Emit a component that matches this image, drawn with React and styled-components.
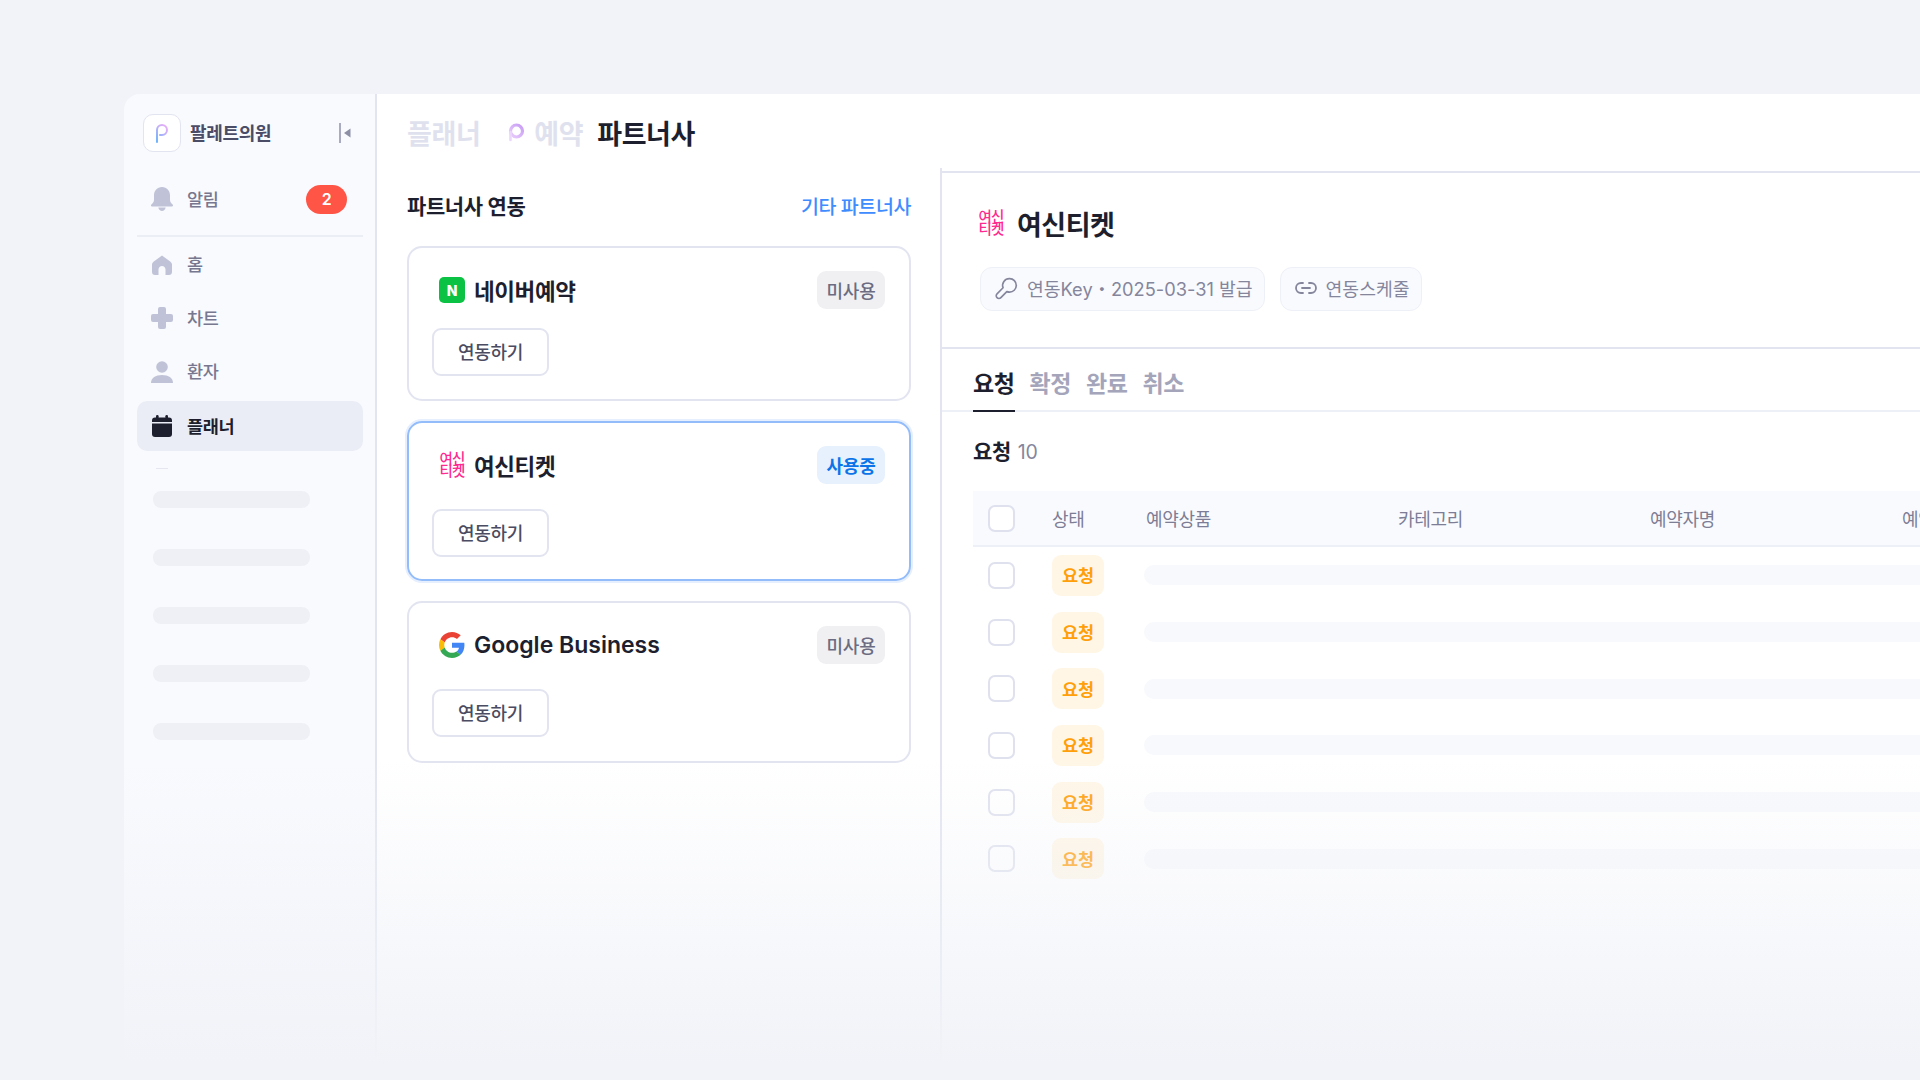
import React from 'react'
import styled, { createGlobalStyle } from 'styled-components'
import { Link2 } from 'lucide-react'

const GlobalStyle = createGlobalStyle`
  html, body { margin: 0; padding: 0; background: #f1f3f8; }
  * { box-sizing: border-box; }
  body { font-family: Inter, "Noto Sans CJK KR", "Noto Sans", sans-serif; color: #1e1f2e; }
`

const Page = styled.div`
  position: relative;
  width: 1920px;
  height: 1080px;
  overflow: hidden;
  padding: 94px 0 0 124px;
  display: flex;
  background: #f1f3f8;
`
const Fade = styled.div`
  position: absolute;
  left: 0;
  right: 0;
  top: 760px;
  height: 320px;
  pointer-events: none;
  background: linear-gradient(to bottom, rgba(241,243,248,0) 0%, rgba(241,243,248,1) 95%);
`
const Side = styled.aside`
  width: 253px;
  flex: none;
  background: #f9fafe;
  border-right: 2px solid #e2e4f0;
  border-top-left-radius: 16px;
  padding: 20px 12px 0 13px;
`
const Brand = styled.div`
  display: flex;
  align-items: center;
  height: 38px;
  padding: 0 6px;
  margin-bottom: 25px;
`
const BrandBox = styled.div`
  width: 38px;
  height: 38px;
  border: 1.5px solid #e2e4f0;
  border-radius: 10px;
  background: #fff;
  display: flex;
  align-items: center;
  justify-content: center;
`
const BrandName = styled.span`
  margin-left: 9px;
  font-size: 18px;
  font-weight: 600;
  color: #4b4c66;
  letter-spacing: -0.3px;
  flex: 1;
  position: relative;
  top: -1px;
`
const Collapse = styled.svg`
  margin-right: 6px;
`
const NavItem = styled.div`
  display: flex;
  align-items: center;
  height: ${p => p.$h || 50}px;
  padding: 0 13px;
  gap: 13px;
  border-radius: 10px;
  font-size: 17.5px;
  letter-spacing: -0.3px;
  color: ${p => (p.$active ? '#1e1f2e' : '#77788f')};
  background: ${p => (p.$active ? '#ebedf6' : 'transparent')};
  font-weight: ${p => (p.$active ? 600 : 500)};
  margin-top: ${p => (p.$active ? 2.5 : 0)}px;
`
const NavLabel = styled.span`
  flex: 1;
  position: relative;
  top: -1px;
`
const NavIcon = styled.svg`
  width: 24px;
  height: 24px;
  flex: none;
`
const Counter = styled.span`
  width: 41px;
  height: 29px;
  border-radius: 15px;
  background: #ff5546;
  color: #fff;
  font-size: 16px;
  font-weight: 600;
  display: flex;
  align-items: center;
  justify-content: center;
  margin-right: 3px;
`
const SideRule = styled.div`
  height: 2px;
  background: #eceef5;
  margin: 14px 0 1px;
`
const Tick = styled.div`
  width: 12px;
  height: 1px;
  background: #e5e7f0;
  margin: 17px 0 0 19px;
`
const SkeletonList = styled.div`
  display: flex;
  flex-direction: column;
  gap: 41px;
  margin: 22px 0 0 16px;
`
const SideSkeleton = styled.div`
  width: 157px;
  height: 17px;
  border-radius: 8px;
  background: #eff0f6;
`

const Main = styled.main`
  flex: 1;
  background: #fff;
  display: flex;
  flex-direction: column;
  min-width: 0;
`
const Crumbs = styled.div`
  height: 74px;
  flex: none;
  display: flex;
  align-items: center;
  padding: 2px 0 0 30px;
  font-size: 27px;
  font-weight: 600;
  letter-spacing: -0.4px;
  color: #dfe2ee;
`
const CrumbCurrent = styled.span`
  color: #1e1f2e;
  margin-left: 14px;
`
const CrumbRing = styled.svg`
  margin: 0 8px 0 26px;
`
const Split = styled.div`
  flex: 1;
  display: flex;
  min-height: 0;
`
const Left = styled.section`
  width: 563px;
  flex: none;
  padding: 21px 29px 0 30px;
`
const SectionHead = styled.div`
  display: flex;
  justify-content: space-between;
  align-items: center;
  height: 32px;
  margin-bottom: 25px;
`
const SectionTitle = styled.h2`
  margin: 0;
  font-size: 21px;
  font-weight: 600;
  letter-spacing: -0.4px;
`
const SectionLink = styled.a`
  font-size: 19.5px;
  font-weight: 500;
  letter-spacing: -0.4px;
  color: #3f8cff;
`
const Cards = styled.div`
  display: flex;
  flex-direction: column;
  gap: 20px;
`
const Card = styled.article`
  height: ${p => p.$h}px;
  border: 2px solid ${p => (p.$active ? '#93bcfb' : '#e2e4f0')};
  box-shadow: ${p => (p.$active ? '0 0 0 2px #e6effd' : 'none')};
  border-radius: 15px;
  padding: 23px 24px 0 23px;
`
const CardTop = styled.div`
  display: flex;
  align-items: center;
  height: 38px;
  padding: 0 0 0 7px;
  margin-bottom: ${p => p.$gap}px;
`
const CardName = styled.h3`
  margin: 0 0 0 9px;
  flex: 1;
  font-size: ${p => (p.$latin ? 23 : 22.5)}px;
  font-weight: 600;
  letter-spacing: ${p => (p.$latin ? 0 : -0.4)}px;
  color: #1e1f2e;
`
const StatusTag = styled.span`
  width: 68px;
  height: 38px;
  border-radius: 9px;
  display: flex;
  align-items: center;
  justify-content: center;
  font-size: 18px;
  letter-spacing: -0.3px;
  font-weight: ${p => (p.$on ? 600 : 500)};
  color: ${p => (p.$on ? '#0a74e8' : '#6b6c82')};
  background: ${p => (p.$on ? '#e6f1fd' : '#f0f0f3')};
`
const LinkButton = styled.button`
  width: 117px;
  height: 48px;
  border: 2px solid #e2e4f0;
  border-radius: 9px;
  background: #fff;
  font: inherit;
  font-size: 18px;
  font-weight: 500;
  letter-spacing: -0.3px;
  color: #4b4c62;
  padding: 0 0 2px;
`
const NaverMark = styled.span`
  width: 26px;
  height: 26px;
  border-radius: 5px;
  background: #0cc244;
  color: #fff;
  font-size: 14px;
  font-weight: 800;
  display: flex;
  align-items: center;
  justify-content: center;
  flex: none;
`
const TicketMark = styled.span`
  width: 26px;
  flex: none;
  color: #ff2a8f;
  font-size: 14.5px;
  line-height: 12.5px;
  font-weight: 500;
  letter-spacing: -0.8px;
  text-align: center;
  white-space: pre-line;
`

const Right = styled.section`
  flex: 1;
  min-width: 0;
  border-left: 2px solid #e2e4f0;
  display: flex;
  flex-direction: column;
`
const RightHead = styled.div`
  border-top: 2px solid #e2e4f0;
  margin-top: 3px;
  height: 178px;
  flex: none;
  padding: 28px 0 0 36px;
  border-bottom: 2px solid #e2e4f0;
`
const RightTitleRow = styled.div`
  display: flex;
  align-items: center;
  height: 44px;
  margin-bottom: 22px;
`
const RightTitle = styled.h1`
  margin: 0 0 0 13px;
  font-size: 27px;
  font-weight: 600;
  letter-spacing: -0.5px;
`
const PillRow = styled.div`
  display: flex;
  gap: 15px;
  margin-left: 2px;
`
const InfoPill = styled.div`
  height: 44px;
  padding: 0 11px 2px 13px;
  display: flex;
  align-items: center;
  gap: 8px;
  border: 1.5px solid #eef0f7;
  border-radius: 12px;
  background: #f9fafe;
  color: #85869c;
  font-size: 18.25px;
`
const Body = styled.div`
  padding: 0 0 0 31px;
`
const Tabs = styled.div`
  display: flex;
  gap: 15px;
  height: 63px;
  border-bottom: 2px solid #eef0f7;
  margin-left: -31px;
  padding-left: 31px;
`
const Tab = styled.div`
  height: 63px;
  padding-top: 16px;
  font-size: 23px;
  font-weight: 600;
  letter-spacing: -0.4px;
  color: ${p => (p.$active ? '#1e1f2e' : '#a4a5bb')};
  border-bottom: 2px solid ${p => (p.$active ? '#1e1f2e' : 'transparent')};
`
const CountRow = styled.div`
  display: flex;
  align-items: baseline;
  gap: 7px;
  height: 79px;
  padding-top: 23px;
  font-size: 21px;
  font-weight: 600;
  letter-spacing: -0.4px;
`
const CountNum = styled.span`
  font-size: 19.5px;
  font-weight: 400;
  color: #85869c;
`
const Table = styled.div`
  width: 1100px;
`
const HeadRow = styled.div`
  display: grid;
  grid-template-columns: 64px 94px 252px 252px 252px 172px;
  align-items: center;
  height: 56px;
  padding-left: 15px;
  background: #f9fafe;
  border-bottom: 2px solid #eef0f7;
  font-size: 18px;
  letter-spacing: -0.35px;
  color: #7d7e95;
`
const DataRow = styled.div`
  display: grid;
  grid-template-columns: 64px 92px 1fr;
  align-items: center;
  height: 56.7px;
  padding-left: 15px;
`
const Check = styled.span`
  display: block;
  width: 27px;
  height: 27px;
  border: 2px solid #dfe1ee;
  border-radius: 7px;
  background: #fff;
`
const RequestTag = styled.span`
  width: 52px;
  height: 41px;
  border-radius: 9px;
  background: #fff6e6;
  color: #ff9f0a;
  font-size: 17.5px;
  font-weight: 600;
  display: flex;
  align-items: center;
  justify-content: center;
  padding-bottom: 1px;
`
const RowSkeleton = styled.div`
  height: 20px;
  border-radius: 10px;
  background: #f8f9fc;
`

const IconBell = () => (
  <NavIcon viewBox="0 0 24 24" fill="#c0c3d7">
    <path d="M12 0C7.200 0 4 3.600 4 8.500V13c0 1.900-1.200 3.300-2.600 4.500-.8.700-.4 1.900.6 1.900h20c1 0 1.400-1.200.6-1.900C21.200 16.300 20 14.900 20 13V8.500C20 3.600 16.800 0 12 0z" />
    <path d="M8.300 20.600h7.400C15.200 22.800 13.800 24 12 24s-3.200-1.200-3.700-3.400z" />
  </NavIcon>
)
const IconHome = () => (
  <NavIcon viewBox="0 0 24 24" fill="#c0c3d7">
    <path d="M12 2.500 3.800 8.400C2.700 9.200 2 10.300 2 11.700V19c0 1.700 1.200 3 3 3h3.500v-5.500c0-1.900 1.600-3.500 3.500-3.500s3.500 1.600 3.500 3.500V22H19c1.800 0 3-1.300 3-3v-7.300c0-1.400-.7-2.500-1.800-3.300z" />
  </NavIcon>
)
const IconPlus = () => (
  <NavIcon viewBox="0 0 24 24" fill="#c0c3d7">
    <path d="M10 1h4a2 2 0 0 1 2 2v5h5a2 2 0 0 1 2 2v4a2 2 0 0 1-2 2h-5v5a2 2 0 0 1-2 2h-4a2 2 0 0 1-2-2v-5H3a2 2 0 0 1-2-2v-4a2 2 0 0 1 2-2h5V3a2 2 0 0 1 2-2z" />
  </NavIcon>
)
const IconPerson = () => (
  <NavIcon viewBox="0 0 24 24" fill="#c0c3d7">
    <circle cx="12" cy="7" r="5.800" />
    <path d="M1 23c0-5.200 4.600-8 11-8s11 2.800 11 8z" />
  </NavIcon>
)
const IconCalendar = () => (
  <NavIcon viewBox="0 0 24 24" fill="#1e1f2e">
    <rect x="6" y="1" width="2.600" height="5" rx="1.200" />
    <rect x="15.400" y="1" width="2.600" height="5" rx="1.200" />
    <path d="M5 3.500h14a3 3 0 0 1 3 3V8H2V6.500a3 3 0 0 1 3-3z" />
    <path d="M2 9.500h20V20a3 3 0 0 1-3 3H5a3 3 0 0 1-3-3z" />
  </NavIcon>
)
const IconKey = () => (
  <svg width="25" height="25" viewBox="0 0 24 24" fill="none" stroke="#85869c" strokeWidth="1.600" strokeLinejoin="round" style={{ flex: 'none' }}>
    <path d="M15 2.500a6.500 6.500 0 1 1-.2 13c-.9 0-1.700-.2-2.500-.5l-5.700 5.800a2.600 2.600 0 0 1-3.700 0 2.600 2.600 0 0 1 0-3.700l5.800-5.800A6.500 6.500 0 0 1 15 2.500z" />
  </svg>
)
const GoogleMark = () => (
  <svg width="26" height="26" viewBox="0 0 48 48" style={{ flex: 'none' }}>
    <path fill="#EA4335" d="M24 9.500c3.500 0 6.700 1.200 9.200 3.600l6.900-6.900C35.900 2.400 30.500 0 24 0 14.600 0 6.500 5.400 2.600 13.200l8 6.200C12.400 13.700 17.700 9.500 24 9.500z" />
    <path fill="#4285F4" d="M47 24.500c0-1.600-.1-3.100-.4-4.500H24v9h12.900c-.6 3-2.200 5.500-4.700 7.200l7.700 6C44.400 38 47 31.800 47 24.500z" />
    <path fill="#FBBC05" d="M10.500 28.600c-.5-1.400-.8-3-.8-4.600s.3-3.200.8-4.600l-8-6.200C.9 16.500 0 20.100 0 24s.9 7.500 2.600 10.800z" />
    <path fill="#34A853" d="M24 48c6.500 0 11.900-2.100 15.900-5.800l-7.700-6c-2.200 1.400-4.900 2.300-8.200 2.300-6.300 0-11.600-4.200-13.500-9.900l-8 6.200C6.500 42.600 14.600 48 24 48z" />
  </svg>
)

const products = ['예약상품', '카테고리', '예약자명', '예약일시']
const rows = [0, 1, 2, 3, 4, 5]

export default function App() {
  return (
    <Page>
      <GlobalStyle />
      <Side>
        <Brand>
          <BrandBox>
            <svg width="14" height="20" viewBox="0 0 14 20" fill="none">
              <defs>
                <linearGradient id="brandGrad" x1="0" y1="1" x2="0.6" y2="0">
                  <stop offset="0" stopColor="#6fb4fb" />
                  <stop offset="1" stopColor="#e0aef8" />
                </linearGradient>
              </defs>
              <path d="M2 19V7a5 5 0 1 1 5 5H5" stroke="url(#brandGrad)" strokeWidth="2" strokeLinecap="round" />
            </svg>
          </BrandBox>
          <BrandName>팔레트의원</BrandName>
          <Collapse width="12" height="20" viewBox="0 0 12 20">
            <rect x="0" y="0" width="2" height="20" fill="#a9abc0" />
            <path d="M11.500 5.500v9L5 10z" fill="#8d8fa6" />
          </Collapse>
        </Brand>
        <NavItem $h={44}>
          <IconBell />
          <NavLabel>알림</NavLabel>
          <Counter>2</Counter>
        </NavItem>
        <SideRule />
        <NavItem $h={53.5}><IconHome /><NavLabel>홈</NavLabel></NavItem>
        <NavItem $h={53.5}><IconPlus /><NavLabel>차트</NavLabel></NavItem>
        <NavItem $h={53.5}><IconPerson /><NavLabel>환자</NavLabel></NavItem>
        <NavItem $active><IconCalendar /><NavLabel>플래너</NavLabel></NavItem>
        <Tick />
        <SkeletonList>
          {[0, 1, 2, 3, 4].map(i => <SideSkeleton key={i} />)}
        </SkeletonList>
      </Side>

      <Main>
        <Crumbs>
          <span>플래너</span>
          <CrumbRing width="20" height="20" viewBox="0 0 20 20" fill="none">
            <defs>
              <linearGradient id="ringGrad" x1="0" y1="1" x2="1" y2="0">
                <stop offset="0" stopColor="#e9cdfb" />
                <stop offset="1" stopColor="#c79cf5" />
              </linearGradient>
            </defs>
            <circle cx="10.500" cy="9" r="6" stroke="url(#ringGrad)" strokeWidth="3.200" />
            <path d="M4.500 10v8" stroke="#ecd6fb" strokeWidth="2.600" strokeLinecap="round" />
          </CrumbRing>
          <span>예약</span>
          <CrumbCurrent>파트너사</CrumbCurrent>
        </Crumbs>
        <Split>
          <Left>
            <SectionHead>
              <SectionTitle>파트너사 연동</SectionTitle>
              <SectionLink>기타 파트너사</SectionLink>
            </SectionHead>
            <Cards>
              <Card $h={155}>
                <CardTop $gap={19}>
                  <NaverMark>N</NaverMark>
                  <CardName>네이버예약</CardName>
                  <StatusTag>미사용</StatusTag>
                </CardTop>
                <LinkButton>연동하기</LinkButton>
              </Card>
              <Card $h={160} $active>
                <CardTop $gap={25}>
                  <TicketMark>{'여신\n티켓'}</TicketMark>
                  <CardName>여신티켓</CardName>
                  <StatusTag $on>사용중</StatusTag>
                </CardTop>
                <LinkButton>연동하기</LinkButton>
              </Card>
              <Card $h={162}>
                <CardTop $gap={25}>
                  <GoogleMark />
                  <CardName $latin>Google Business</CardName>
                  <StatusTag>미사용</StatusTag>
                </CardTop>
                <LinkButton>연동하기</LinkButton>
              </Card>
            </Cards>
          </Left>
          <Right>
            <RightHead>
              <RightTitleRow>
                <TicketMark>{'여신\n티켓'}</TicketMark>
                <RightTitle>여신티켓</RightTitle>
              </RightTitleRow>
              <PillRow>
                <InfoPill>
                  <IconKey />
                  연동Key・2025-03-31 발급
                </InfoPill>
                <InfoPill>
                  <Link2 size={24} strokeWidth={1.8} color="#85869c" />
                  연동스케줄
                </InfoPill>
              </PillRow>
            </RightHead>
            <Body>
              <Tabs>
                <Tab $active>요청</Tab>
                <Tab>확정</Tab>
                <Tab>완료</Tab>
                <Tab>취소</Tab>
              </Tabs>
              <CountRow>요청 <CountNum>10</CountNum></CountRow>
              <Table>
                <HeadRow>
                  <Check />
                  <span>상태</span>
                  {products.map(p => <span key={p}>{p}</span>)}
                </HeadRow>
                {rows.map(i => (
                  <DataRow key={i}>
                    <Check />
                    <RequestTag>요청</RequestTag>
                    <RowSkeleton />
                  </DataRow>
                ))}
              </Table>
            </Body>
          </Right>
        </Split>
      </Main>
      <Fade />
    </Page>
  )
}
